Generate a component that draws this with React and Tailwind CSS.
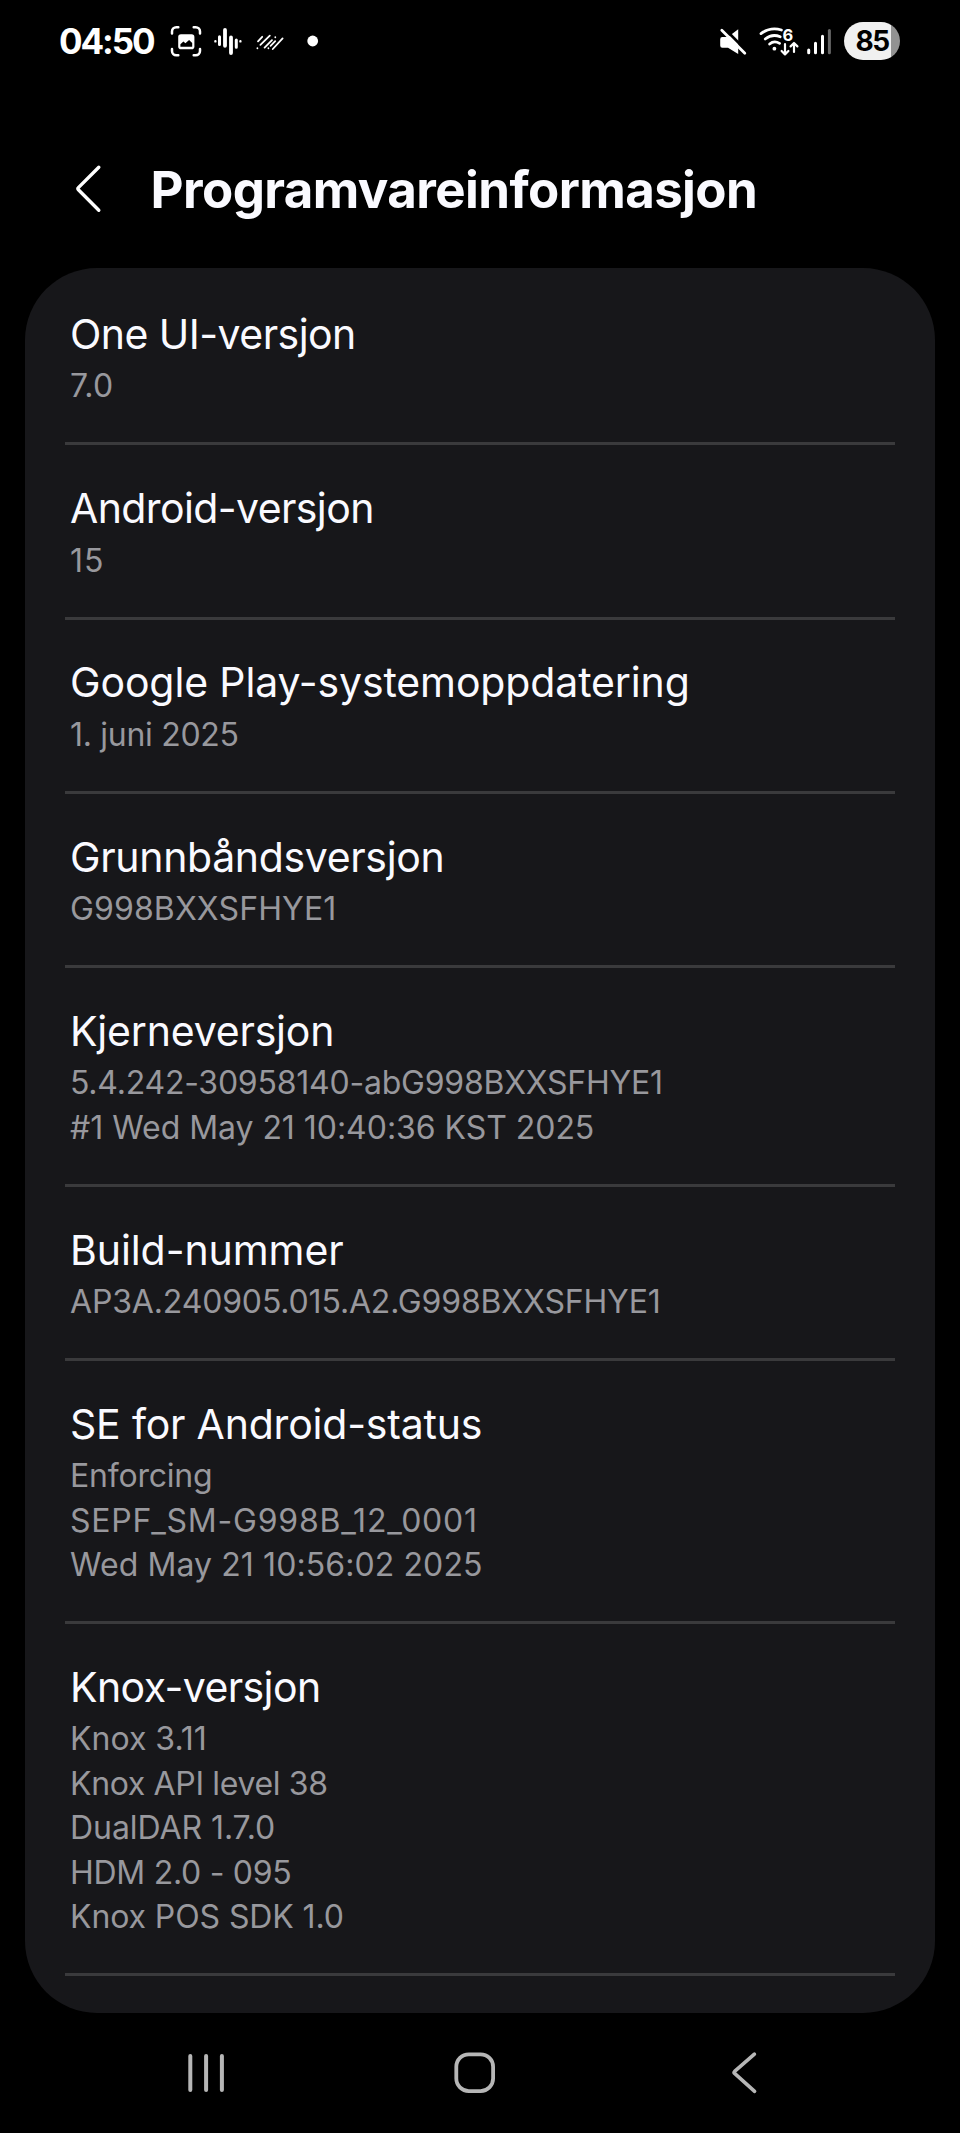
const sections = [
  {
    title: "One UI-versjon",
    tracking: "tracking-[-0.54px]",
    lines: [{ text: "7.0", tracking: "tracking-[0.2px]" }],
  },
  {
    title: "Android-versjon",
    tracking: "tracking-[-0.6px]",
    lines: [{ text: "15", tracking: "tracking-[1px]" }],
  },
  {
    title: "Google Play-systemoppdatering",
    tracking: "tracking-[-0.13px]",
    lines: [{ text: "1. juni 2025", tracking: "tracking-[-0.3px]" }],
  },
  {
    title: "Grunnbåndsversjon",
    tracking: "tracking-[-0.34px]",
    lines: [{ text: "G998BXXSFHYE1", tracking: "tracking-[0.12px]" }],
  },
  {
    title: "Kjerneversjon",
    tracking: "tracking-[-0.19px]",
    lines: [
      { text: "5.4.242-30958140-abG998BXXSFHYE1", tracking: "tracking-[-0.23px]" },
      { text: "#1 Wed May 21 10:40:36 KST 2025", tracking: "tracking-[-0.04px]" },
    ],
  },
  {
    title: "Build-nummer",
    tracking: "tracking-[-0.08px]",
    lines: [{ text: "AP3A.240905.015.A2.G998BXXSFHYE1", tracking: "tracking-[-0.16px]" }],
  },
  {
    title: "SE for Android-status",
    tracking: "tracking-[-0.2px]",
    lines: [
      { text: "Enforcing", tracking: "tracking-[-0.21px]" },
      { text: "SEPF_SM-G998B_12_0001", tracking: "tracking-[0.78px]" },
      { text: "Wed May 21 10:56:02 2025", tracking: "tracking-[0.09px]" },
    ],
  },
  {
    title: "Knox-versjon",
    tracking: "tracking-[-0.6px]",
    lines: [
      { text: "Knox 3.11", tracking: "tracking-[0px]" },
      { text: "Knox API level 38", tracking: "tracking-[-0.35px]" },
      { text: "DualDAR 1.7.0", tracking: "tracking-[-0.06px]" },
      { text: "HDM 2.0 - 095", tracking: "tracking-[-0.28px]" },
      { text: "Knox POS SDK 1.0", tracking: "tracking-[-0.1px]" },
    ],
  },
];

function NotificationIcons() {
  return (
    <svg className="h-20 w-[160px]" viewBox="164 0 160 80" fill="none" stroke="#fff" strokeLinecap="round">
      {/* screen capture */}
      <g strokeWidth="2.5">
        <path d="M172 33.5V31.5a4.3 4.3 0 0 1 4.3-4.3H178.3" />
        <path d="M193.7 27.2H195.7a4.3 4.3 0 0 1 4.3 4.3V33.5" />
        <path d="M200 49V51a4.3 4.3 0 0 1-4.3 4.3H193.7" />
        <path d="M178.3 55.3H176.3a4.3 4.3 0 0 1-4.3-4.3V49" />
      </g>
      <rect x="178.2" y="34.2" width="16.2" height="15" rx="2.8" fill="#fff" stroke="none" />
      <path d="M180.4 46.8V44.2L183.4 41.4L185.4 43.2L189.1 40L192.2 43V46.8Z" fill="#000" stroke="none" />
      {/* sound wave */}
      <path d="M215.4 41.2V41.4M240.4 41.2V41.4" strokeWidth="2.4" />
      <path d="M219.5 36.8V44.6M236.3 40V47.2" strokeWidth="3" />
      <path d="M225 30V45.8M231 37.4V53" strokeWidth="3.8" />
      {/* diagonal stripes */}
      <g strokeWidth="1.8">
        <path d="M258 41.4L262.2 36.8M260.4 44.8L269.8 35.6M257.4 48.2V48.3M264.6 47.6L272 40.2M275.3 37.2V37.3M268.4 48.2V48.3M270.6 45.8L275.2 41.2M272.8 49L282.6 38.4" />
      </g>
      <circle cx="312.7" cy="41" r="5.4" fill="#fff" stroke="none" />
    </svg>
  );
}

function ConnectivityIcons() {
  return (
    <svg className="h-20 w-[125px]" viewBox="712 0 125 80" fill="none" stroke="#fff" strokeLinecap="round" strokeLinejoin="round">
      {/* muted speaker */}
      <path d="M722.3 37H728L738.2 29.2V54L728 47.8H722.3Q720.2 47.8 720.2 45.6V39.2Q720.2 37 722.3 37Z" fill="#fff" stroke="none" />
      <path d="M723.6 27.8L747.2 51.4" stroke="#000" strokeWidth="2.8" strokeLinecap="butt" />
      <path d="M721.8 30.2L744.8 53.2" strokeWidth="2.8" />
      {/* wifi 6 */}
      <g strokeWidth="2.8">
        <path d="M761 33.6Q770.5 26.6 781.4 30" />
        <path d="M765.2 39Q772.2 33.4 780.2 36.8" />
        <path d="M769.6 44Q774.2 40.2 779.6 43.4" />
      </g>
      <circle cx="774.4" cy="48.7" r="1.9" fill="#fff" stroke="none" />
      <text x="782.6" y="40.6" fill="#fff" stroke="none" fontFamily="Inter, sans-serif" fontWeight="700" fontSize="16.5">6</text>
      <path d="M785 44.2V54.2M781.6 51L785 54.4L788.4 51M794 52V43.2M790.6 46.4L794 43L797.4 46.4" strokeWidth="2.2" />
      {/* signal strength */}
      <g strokeWidth="3">
        <path d="M808.7 50V52.8M815.5 43.2V52.8M822.5 36.2V52.8" />
        <path d="M829.4 30.4V52.8" stroke="#666" />
      </g>
    </svg>
  );
}

function StatusBar() {
  return (
    <div className="flex h-20 items-start justify-between pl-[59px] pr-[60px]">
      <div className="flex">
        <span className="w-[105px] whitespace-nowrap text-[35px] font-bold leading-[82px] tracking-[-2.1px]">04:50</span>
        <NotificationIcons />
      </div>
      <div className="flex">
        <ConnectivityIcons />
        <div className="ml-[7px] mt-[22px] flex h-[38px] w-14 items-center justify-center overflow-hidden rounded-full bg-linear-to-r from-[#f0f0f0] from-84% to-[#929292] to-84%">
          <span className="text-[28px] font-bold leading-[38px] tracking-[-1.6px] text-black">85</span>
        </div>
      </div>
    </div>
  );
}

function Header() {
  return (
    <header className="flex h-[188px] items-start pl-[74px] pt-[79px]">
      <svg className="h-[60px] w-[30px]" viewBox="74 159 30 60" fill="none" stroke="#fff" strokeWidth="3.4" strokeLinecap="round" strokeLinejoin="round">
        <path d="M98.8 167.2L78.4 187.6Q77.4 188.7 78.4 189.8L98.8 210.2" />
      </svg>
      <h1 className="ml-[46.6px] whitespace-nowrap text-[51px] font-bold leading-[62px] tracking-[-0.6px] text-[#fafaff]">Programvareinformasjon</h1>
    </header>
  );
}

function Section({ title, tracking, lines }) {
  return (
    <section className="whitespace-nowrap border-b-[3px] border-[#3a3a3c] pb-[33.5px] pl-[5px] pt-[33.9px]">
      <h2 className={`text-[41px] leading-[58px] text-[#fafaff] ${tracking}`}>{title}</h2>
      <div className="mt-[1.4px] text-[32px] leading-[44.44px] text-[#98989d]">
        {lines.map((line) => (
          <p key={line.text} className={line.tracking}>{line.text}</p>
        ))}
      </div>
    </section>
  );
}

function NavigationBar() {
  return (
    <nav className="flex h-[120px] items-center pl-[186px]">
      <svg className="h-[120px] w-10" viewBox="186 2013 40 120" stroke="#b6b6b6" strokeWidth="4" strokeLinecap="round">
        <path d="M190.3 2056V2090M206.1 2056V2090M221.9 2056V2090" />
      </svg>
      <svg className="ml-[224px] h-[120px] w-12" viewBox="450 2013 48 120" fill="none" stroke="#b6b6b6" strokeWidth="3.8">
        <rect x="456.3" y="2054.3" width="36.8" height="36.8" rx="12.5" />
      </svg>
      <svg className="ml-[230px] h-[120px] w-8" viewBox="728 2013 32 120" fill="none" stroke="#b6b6b6" strokeWidth="3.6" strokeLinecap="round" strokeLinejoin="round">
        <path d="M754.4 2054.2L734.6 2071.4Q733.6 2072.4 734.6 2073.4L754.6 2091.4" />
      </svg>
    </nav>
  );
}

export default function App() {
  return (
    <div className="flex h-[2133px] w-[960px] flex-col overflow-hidden bg-black font-['Inter',sans-serif] text-white">
      <StatusBar />
      <Header />
      <main className="mx-[25px] h-[1745px] rounded-[72px] bg-[#17171a] px-10 pt-[3.1px]">
        {sections.map((section) => (
          <Section key={section.title} {...section} />
        ))}
      </main>
      <NavigationBar />
    </div>
  );
}
